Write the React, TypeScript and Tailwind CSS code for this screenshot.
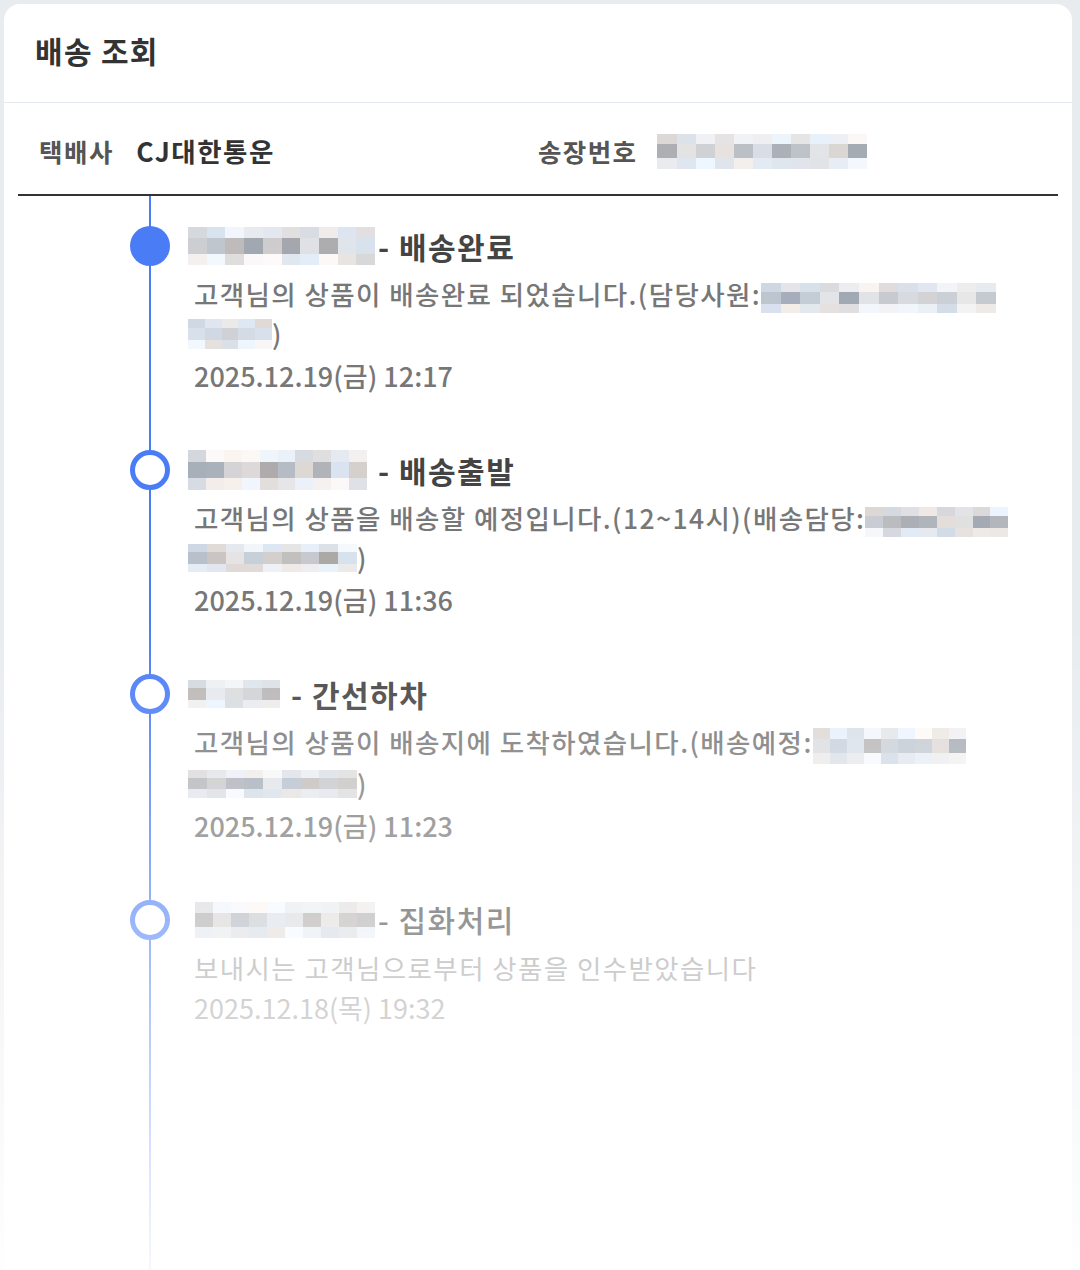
import React from "react";

// deterministic random for the blurred (mosaic) personal info blocks
function rng(seed: number) {
  let s = seed;
  return () => {
    s = (s * 16807) % 2147483647;
    return (s - 1) / 2147483646;
  };
}

function Mosaic({ cols, seed, className }: { cols: number; seed: number; className: string }) {
  const r = rng(seed);
  const rows = [0, 1, 2].map((row) =>
    Array.from({ length: cols }, () => {
      const v = row === 1 ? 165 + r() * 65 : 214 + r() * 34;
      const t = (r() - 0.5) * 16;
      return `rgb(${Math.round(v + t)}, ${Math.round(v + 2)}, ${Math.round(v - t + 6)})`;
    })
  );
  return (
    <span className={`inline-flex flex-col align-middle ${className}`}>
      {rows.map((row, i) => (
        <span key={i} className={i === 1 ? "flex flex-[1.3]" : "flex flex-1"}>
          {row.map((c, j) => (
            <span key={j} className="flex-1" style={{ backgroundColor: c }} />
          ))}
        </span>
      ))}
    </span>
  );
}

function Dot({ filled }: { filled?: boolean }) {
  return filled ? (
    <div className="relative z-10 size-[40px] rounded-full bg-[#4a7cf6]" />
  ) : (
    <div className="relative z-10 size-[40px] rounded-full border-[5px] border-[#4a7cf6] bg-white" />
  );
}

export default function App() {
  return (
    <div className="relative h-[1270px] w-[1080px] overflow-hidden bg-[#e9ecef] pl-[4px] pt-[4px] font-['Noto_Sans_CJK_KR','Noto_Sans',sans-serif]">
      <div className="h-full w-[1068px] rounded-t-[16px] bg-white">
        <div className="flex h-[99px] items-center border-b border-[#e3e9ee] pb-[6px] pl-[31px]">
          <h2 className="text-[30px] font-bold tracking-[1.3px] text-[#333]">배송 조회</h2>
        </div>

        <div className="mx-[14px]">
          <div className="flex h-[93px] items-center border-b-2 border-[#333] pl-[21px] pt-[5px]">
            <div className="flex w-[499px] items-center gap-[22px]">
              <span className="text-[25.5px] font-semibold tracking-[1.6px] text-[#555]">택배사</span>
              <span className="text-[26.5px] font-bold tracking-[1.5px] text-[#333]">CJ대한통운</span>
            </div>
            <span className="text-[25.5px] font-semibold tracking-[1.4px] text-[#555]">송장번호</span>
            <Mosaic cols={11} seed={7} className="ml-[20px] h-[35px] w-[210px]" />
          </div>

          <div className="relative pt-[30px]">
            <div className="absolute bottom-0 left-[131px] top-0 w-[2px] bg-[#4a7cf6]" />

            {/* 배송완료 */}
            <div className="flex gap-[18px] pb-[54px] pl-[112px]">
              <Dot filled />
              <div className="flex-1">
                <div className="flex h-[40px] items-center text-[30px] font-bold tracking-[1.5px] text-[#444]">
                  <Mosaic cols={10} seed={11} className="h-[39px] w-[187px]" />
                  <span className="ml-[3px]">- 배송완료</span>
                </div>
                <div className="mt-[8px] pl-[6px] text-[26.5px] font-medium leading-[40px] tracking-[1.4px] text-[#777]">
                  고객님의 상품이 배송완료 되었습니다.(담당사원:
                  <Mosaic cols={12} seed={23} className="h-[30px] w-[235px]" />
                </div>
                <div className="flex h-[40px] items-center text-[26.5px] font-medium text-[#777]">
                  <Mosaic cols={5} seed={31} className="h-[30px] w-[84px]" />
                  <span>)</span>
                </div>
                <div className="mt-[2px] pl-[6px] text-[27px] font-medium leading-[40px] text-[#777]">
                  2025.12.19(금) 12:17
                </div>
              </div>
            </div>

            {/* 배송출발 */}
            <div className="flex gap-[18px] pb-[54px] pl-[112px]">
              <Dot />
              <div className="flex-1">
                <div className="flex h-[40px] items-center text-[30px] font-bold tracking-[1.5px] text-[#444]">
                  <Mosaic cols={10} seed={41} className="h-[40px] w-[179px]" />
                  <span className="ml-[11px]">- 배송출발</span>
                </div>
                <div className="mt-[8px] pl-[6px] text-[26.5px] font-medium leading-[40px] tracking-[1.4px] text-[#777]">
                  고객님의 상품을 배송할 예정입니다.(12~14시)(배송담당:
                  <Mosaic cols={8} seed={53} className="h-[30px] w-[143px]" />
                </div>
                <div className="flex h-[40px] items-center text-[26.5px] font-medium text-[#777]">
                  <Mosaic cols={9} seed={61} className="h-[28px] w-[169px]" />
                  <span>)</span>
                </div>
                <div className="mt-[2px] pl-[6px] text-[27px] font-medium leading-[40px] text-[#777]">
                  2025.12.19(금) 11:36
                </div>
              </div>
            </div>

            {/* 간선하차 */}
            <div className="flex gap-[18px] pb-[54px] pl-[112px]">
              <Dot />
              <div className="flex-1">
                <div className="flex h-[40px] items-center text-[30px] font-bold tracking-[1.5px] text-[#444]">
                  <Mosaic cols={5} seed={71} className="h-[28px] w-[92px]" />
                  <span className="ml-[11px]">- 간선하차</span>
                </div>
                <div className="mt-[8px] pl-[6px] text-[26.5px] font-medium leading-[40px] tracking-[1.4px] text-[#777]">
                  고객님의 상품이 배송지에 도착하였습니다.(배송예정:
                  <Mosaic cols={9} seed={83} className="h-[36px] w-[153px]" />
                </div>
                <div className="flex h-[40px] items-center text-[26.5px] font-medium text-[#777]">
                  <Mosaic cols={9} seed={97} className="h-[28px] w-[169px]" />
                  <span>)</span>
                </div>
                <div className="mt-[2px] pl-[6px] text-[27px] font-medium leading-[40px] text-[#777]">
                  2025.12.19(금) 11:23
                </div>
              </div>
            </div>

            {/* 집화처리 */}
            <div className="flex gap-[18px] pb-[260px] pl-[112px]">
              <Dot />
              <div className="flex-1">
                <div className="flex h-[40px] items-center text-[30px] font-medium tracking-[1.5px] text-[#444]">
                  <Mosaic cols={10} seed={103} className="ml-[7px] h-[36px] w-[180px]" />
                  <span className="ml-[3px]">- 집화처리</span>
                </div>
                <div className="mt-[8px] pl-[6px] text-[26.5px] leading-[40px] tracking-[1.4px] text-[#999]">
                  보내시는 고객님으로부터 상품을 인수받았습니다
                </div>
                <div className="pl-[6px] text-[27px] leading-[40px] text-[#999]">
                  2025.12.18(목) 19:32
                </div>
              </div>
            </div>
          </div>
        </div>
      </div>

      {/* bottom fade over the list */}
      <div className="pointer-events-none absolute bottom-0 left-0 right-0 top-[620px] z-20 bg-linear-to-b from-white/0 to-white/95" />
    </div>
  );
}
